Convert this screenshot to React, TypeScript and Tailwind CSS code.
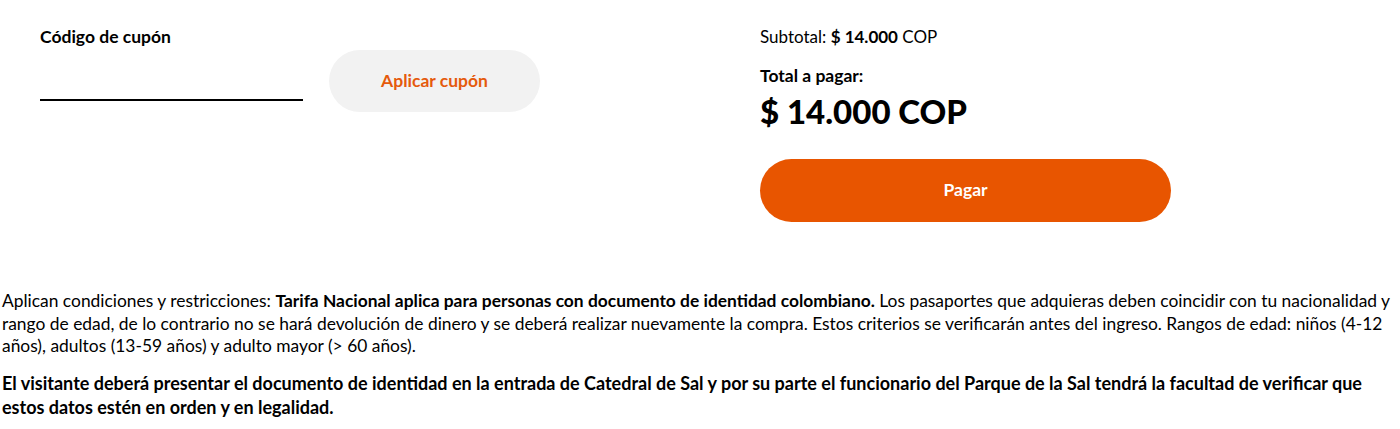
import React from 'react';

const App = () => {
  return (
    <div className="w-[1400px] bg-white text-black" style={{ fontFamily: 'Lato, "Noto Sans", sans-serif' }}>
      <div className="flex pt-[27px]">
        <div className="w-[760px] pl-10 flex items-start">
          <div className="w-[263px]">
            <label className="block text-[17.5px] font-bold leading-5">Código de cupón</label>
            <input className="mt-[28px] w-full border-b-2 border-black outline-none h-[26px] text-base" />
          </div>
          <button className="ml-[26px] mt-[23px] w-[211px] h-[62px] rounded-full bg-[#f2f2f2] text-[#e55a0c] font-bold text-[17.5px]">
            Aplicar cupón
          </button>
        </div>
        <div className="flex flex-col">
          <p className="text-[17px] leading-5">
            Subtotal: <span className="font-bold">$ 14.000</span> COP
          </p>
          <p className="mt-[19px] text-[17.5px] font-bold leading-5">Total a pagar:</p>
          <p className="mt-[5px] text-[33px] font-black leading-10">$ 14.000 COP</p>
          <button className="mt-[28px] w-[411px] h-[63px] rounded-full bg-[#e85500] text-white font-bold text-[17.5px]">
            Pagar
          </button>
        </div>
      </div>
      <div className="px-[2px] pt-[68px]">
        <p className="text-[17.4px] leading-[22.5px]">
          Aplican condiciones y restricciones:{' '}
          <span className="font-bold">Tarifa Nacional aplica para personas con documento de identidad colombiano.</span>{' '}
          Los pasaportes que adquieras deben coincidir con tu nacionalidad y rango de edad, de lo contrario no se hará
          devolución de dinero y se deberá realizar nuevamente la compra. Estos criterios se verificarán antes del ingreso.
          Rangos de edad: niños <span className="whitespace-nowrap">(4-12</span> años), adultos{' '}
          <span className="whitespace-nowrap">(13-59</span> años) y adulto mayor (&gt; 60 años).
        </p>
        <p className="mt-[13px] text-[18px] font-bold leading-6">
          El visitante deberá presentar el documento de identidad en la entrada de Catedral de Sal y por su parte el
          funcionario del Parque de la Sal tendrá la facultad de verificar que estos datos estén en orden y en legalidad.
        </p>
      </div>
    </div>
  );
};

export default App;
